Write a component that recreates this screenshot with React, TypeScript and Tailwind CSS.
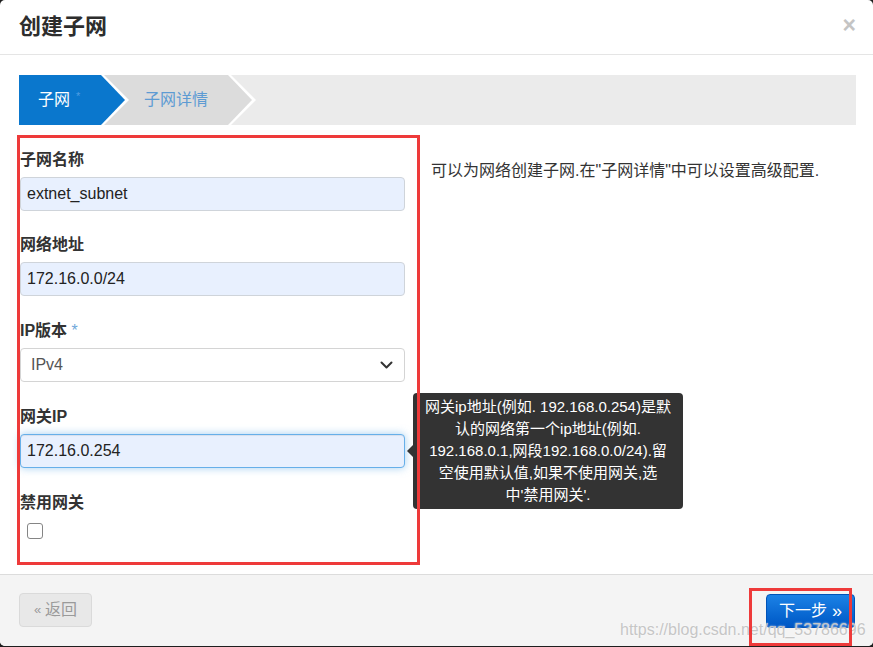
import React from 'react';

const font = "font-['Liberation_Sans','Noto_Sans_CJK_SC',sans-serif]";

function Label({ children }: { children: React.ReactNode }) {
  return <div className="h-[22px] leading-[22px] text-[16px] font-bold text-[#333] mb-[6px]">{children}</div>;
}

export default function App() {
  return (
    <div className={`w-[873px] h-[647px] bg-[#1e1e1e] ${font}`}>
      <div className="w-[873px] h-[646px] bg-white rounded-[5px] flex flex-col overflow-hidden">
        {/* header */}
        <div className="h-[55px] shrink-0 border-b border-[#e5e5e5] flex items-center justify-between pl-[19px] pr-[17px]">
          <div className="text-[22px] font-bold text-[#2d2d2d] leading-none">创建子网</div>
          <div className="text-[23px] font-bold text-[#c4c4c4] leading-none -mt-[4px]">×</div>
        </div>

        {/* body */}
        <div className="flex-1 px-[19px] pt-[20px]">
          {/* wizard */}
          <div className="grid h-[50px] bg-[#ebebeb] -mr-[2px]">
            <div className="col-start-1 row-start-1 w-[237px] h-[50px] bg-white [clip-path:polygon(0_0,212px_0,237px_25px,212px_50px,0_50px)]" />
            <div className="col-start-1 row-start-1 w-[233px] h-[50px] bg-[#dcdcdc] [clip-path:polygon(0_0,209px_0,233px_25px,209px_50px,0_50px)] flex items-center">
              <span className="ml-[125px] text-[16px] text-[#5d9bd3]">子网详情</span>
            </div>
            <div className="col-start-1 row-start-1 w-[110px] h-[50px] bg-white [clip-path:polygon(0_0,85px_0,110px_25px,85px_50px,0_50px)]" />
            <div className="col-start-1 row-start-1 w-[106px] h-[50px] bg-[#0a77cd] [clip-path:polygon(0_0,82px_0,106px_25px,82px_50px,0_50px)] flex items-center">
              <span className="ml-[19px] text-[16px] text-white">子网</span>
              <span className="ml-[6px] -mt-[8px] text-[11px] text-[#4f9ee3]">*</span>
            </div>
          </div>

          {/* content */}
          <div className="flex mt-[10px]">
            <div className="relative w-[403px] -ml-[2px] pl-[3px] pr-[15px] pt-[14px] pb-[26px]">
              <Label>子网名称</Label>
              <input
                readOnly
                value="extnet_subnet"
                className="block w-[385px] h-[34px] bg-[#e8f0fe] border border-[#cfd4da] rounded-[4px] pl-[6px] text-[16px] text-[#222] outline-none"
              />
              <div className="h-[23px]" />
              <Label>网络地址</Label>
              <input
                readOnly
                value="172.16.0.0/24"
                className="block w-[385px] h-[34px] bg-[#e8f0fe] border border-[#cfd4da] rounded-[4px] pl-[6px] text-[16px] text-[#222] outline-none"
              />
              <div className="h-[24px]" />
              <Label>
                IP版本 <span className="font-normal text-[#6fa7da]">*</span>
              </Label>
              <div className="w-[385px] h-[34px] bg-white border border-[#d4d4d4] rounded-[4px] pl-[10px] pr-[10px] flex items-center justify-between">
                <span className="text-[16px] text-[#555]">IPv4</span>
                <svg width="13" height="9" viewBox="0 0 13 9" className="mr-[1px]">
                  <path d="M1.5 1.5 L6.5 6.5 L11.5 1.5" fill="none" stroke="#333" strokeWidth="2" strokeLinecap="round" strokeLinejoin="round" />
                </svg>
              </div>
              <div className="h-[24px]" />
              <Label>网关IP</Label>
              <div className="relative w-[385px]">
                <input
                  readOnly
                  value="172.16.0.254"
                  className="block w-[385px] h-[34px] bg-[#e8f0fe] border border-[#66afe9] rounded-[4px] pl-[6px] text-[16px] text-[#222] outline-none shadow-[inset_0_1px_1px_rgba(0,0,0,0.075),0_0_8px_rgba(102,175,233,0.6)]"
                />
                <div className="absolute left-[393px] top-1/2 -translate-y-1/2 z-10 w-[270px] bg-[#333] rounded-[4px] py-[3px] px-[6px] text-center text-white text-[15px] leading-[22px]">
                  <div className="absolute -left-[6px] top-1/2 -translate-y-1/2 w-0 h-0 border-y-[6px] border-y-transparent border-r-[6px] border-r-[#333]" />
                  <div>网关ip地址(例如. 192.168.0.254)是默</div>
                  <div>认的网络第一个ip地址(例如.</div>
                  <div>192.168.0.1,网段192.168.0.0/24).留</div>
                  <div>空使用默认值,如果不使用网关,选</div>
                  <div>中'禁用网关'.</div>
                </div>
              </div>
              <div className="h-[24px]" />
              <Label>禁用网关</Label>
              <div className="mt-[9px] ml-[7px] w-[16px] h-[16px] border border-[#858585] rounded-[3px] bg-white" />
              <div className="pointer-events-none absolute inset-0 z-20 border-[3px] border-[#ee3a3a]" />
            </div>
            <div className="pl-[11px] pt-[25px] text-[16px] leading-[22px] text-[#333]">
              {'可以为网络创建子网.在"子网详情"中可以设置高级配置.'}
            </div>
          </div>
        </div>

        {/* footer */}
        <div className="relative h-[72px] shrink-0 border-t border-[#dcdcdc] bg-[#f4f4f4] flex items-start justify-between pl-[19px] pr-[18px] pt-[18px]">
          <div className="w-[73px] h-[34px] rounded-[4px] bg-[#e8e8e8] border border-[#dadada] flex items-center justify-center text-[#9a9a9a] text-[16px]">
            <span className="text-[13px] mr-[4px]">«</span>返回
          </div>
          <div className="mt-[1px] w-[89px] h-[34px] rounded-[4px] bg-linear-to-b from-[#1c82e6] to-[#0057c5] border border-[#0053b8] flex items-center justify-center text-white text-[16px]">
            下一步<span className="ml-[5px] text-[18px]">»</span>
          </div>
          <div className="pointer-events-none absolute left-[620px] top-[45px] text-[16px] leading-[20px] text-[#c6c6c6] [text-shadow:0_0_2px_#ffffff]">
            https://blog.csdn.net/qq_53786696
          </div>
          <div className="pointer-events-none absolute left-[749px] top-[13px] w-[103px] h-[58px] border-[3px] border-[#ee3a3a]" />
        </div>
      </div>
    </div>
  );
}
